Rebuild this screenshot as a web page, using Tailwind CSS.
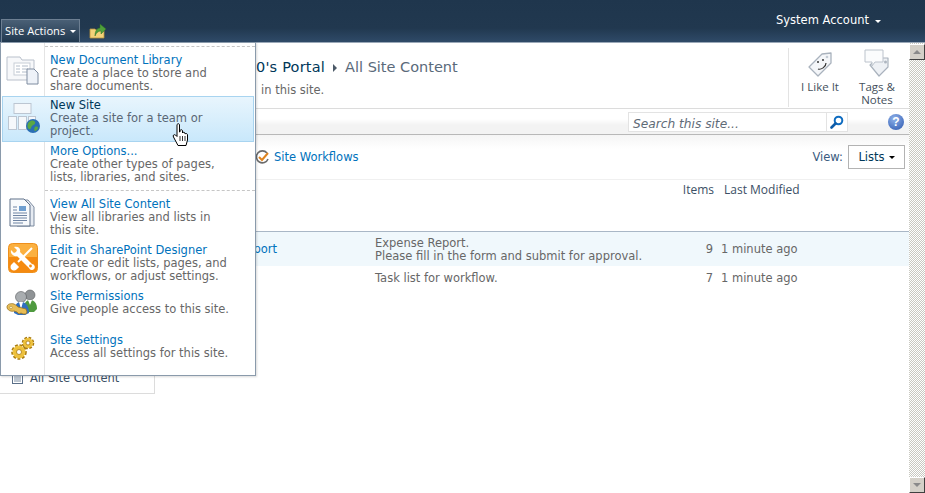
<!DOCTYPE html>
<html lang="en">
<head>
  <meta charset="UTF-8">
  <title>All Site Content</title>
  <script src="https://cdn.jsdelivr.net/npm/@tailwindcss/browser@4"></script>
</head>
<body class="bg-white overflow-hidden">
<div class="relative w-[925px] h-[493px] overflow-hidden bg-white text-[11.5px] leading-[13px] text-[#676767] font-['DejaVu_Sans',sans-serif]">

  <!-- top bar -->
  <div class="h-[43px] flex items-start justify-between bg-[linear-gradient(#1f364d_0,#21384f_28px,#2f4a68_42px)] border-b border-[#9aa8b8]">
    <div class="flex items-center mt-[19px] ml-[1px]">
      <div class="w-[79px] h-[24px] flex items-center pl-[3px] gap-[5px] border border-b-0 border-[#6d7f92] bg-[linear-gradient(#4a6076,#1f364d)] text-white text-[11.2px] font-['Open_Sans',sans-serif]">
        <span class="-mt-[2px]">Site Actions</span>
        <span class="w-0 h-0 border-x-[3px] border-x-transparent border-t-[3px] border-t-white"></span>
      </div>
      <svg class="ml-[9px] -mt-[1px]" width="18" height="16" viewBox="0 0 18 16">
        <path d="M1 6h5l1 1h8v8H1z" fill="#f3d27a" stroke="#b8923c" stroke-width=".8"/>
        <path d="M6 13c0-5 2-8 5-8V1l6 5-5 5V8c-3 0-5 2-6 5z" fill="#4fa03a" stroke="#2f6f24" stroke-width=".5"/>
      </svg>
    </div>
    <div class="flex items-center gap-[6px] mt-[14px] mr-[44px] text-white text-[11.5px]">
      <span>System Account</span>
      <span class="w-0 h-0 border-x-[3px] border-x-transparent border-t-[3px] border-t-white mt-[2px]"></span>
    </div>
  </div>

  <div class="flex h-[450px]">
    <!-- page -->
    <div class="w-[909px] flex flex-col">

      <!-- title row -->
      <div class="h-[66px] shrink-0 flex justify-between border-b border-[#dcdcdc]">
        <div class="pl-[256px] pt-[14px]">
          <div class="flex items-center text-[14.5px] leading-[20px]">
            <span class="text-[#003759] tracking-[0.2px]">0's Portal</span>
            <span class="ml-[8px] mr-[8px] w-0 h-0 border-y-[4px] border-y-transparent border-l-[4px] border-l-[#4c5a68] mt-[2px]"></span>
            <span class="text-[#5a6a7a]">All Site Content</span>
          </div>
          <div class="mt-[7px] pl-[5px] text-[#676767]">in this site.</div>
        </div>
        <div class="flex mt-[5px] mb-[1px] border-l border-[#e3e3e3] w-[121px] text-[#44505c] text-center font-['Open_Sans',sans-serif] text-[11.5px] leading-[13px]">
          <div class="w-[62px] flex flex-col items-center pt-[2px]">
            <svg class="shrink-0" width="28" height="28" viewBox="0 0 28 28">
              <path d="M3 17L16 4l9-1v10L12 26z" fill="#f4f6f9" stroke="#a9b2bd" stroke-width="1.300" stroke-linejoin="round"/>
              <circle cx="21" cy="7" r="1.300" fill="#c3cbd4"/>
              <circle cx="12" cy="12" r="1" fill="#333"/><circle cx="17" cy="10" r="1" fill="#333"/>
              <path d="M12 19c3 1 8-2 8-6" fill="none" stroke="#333" stroke-width="1.200"/>
            </svg>
            <span class="mt-[2px] whitespace-nowrap">I Like It</span>
          </div>
          <div class="w-[52px] flex flex-col items-center whitespace-nowrap">
            <svg class="shrink-0" width="30" height="30" viewBox="0 0 30 30">
              <path d="M8 17l8-7 10 0v9l-9 9z" fill="#eef1f5" stroke="#a9b2bd" stroke-width="1.200" stroke-linejoin="round"/>
              <path d="M3 2h18v12h-8l-3 4v-4H3z" fill="#fbfcfd" stroke="#bcc3cc" stroke-linejoin="round"/>
              <circle cx="23.500" cy="14" r="1.500" fill="#aeb6c0"/>
            </svg>
            <span class="mt-[2px]">Tags &amp;<br>Notes</span>
          </div>
        </div>
      </div>

      <!-- search row -->
      <div class="h-[26px] shrink-0 flex items-start justify-end bg-[linear-gradient(#ffffff_0,#ffffff_10px,#f3f3f3_16px,#f3f3f3)] border-b border-[#b8b8b8]">
        <div class="mt-[3px] flex h-[20px] w-[220px] border border-[#e3e3e3] bg-white mr-[61px]">
          <span class="flex-1 pl-[4px] pt-[3px] text-[12.200px] leading-[16px] italic text-[#5f6b77] whitespace-nowrap overflow-hidden">Search this site...</span>
          <span class="w-[21px] border-l border-[#e3e3e3] flex items-center justify-center">
            <svg width="14" height="14" viewBox="0 0 14 14"><circle cx="8.500" cy="5.500" r="3.800" fill="none" stroke="#0f6cc0" stroke-width="2"/><path d="M5.500 8.500L1.500 12.500" stroke="#0f5ca8" stroke-width="2.600" stroke-linecap="round"/></svg>
          </span>
        </div>
        <span class="absolute left-[888px] top-[114px] w-[16px] h-[16px] rounded-full bg-[radial-gradient(circle_at_40%_30%,#8fb2ea,#2a55ad)] text-white text-[12px] leading-[16px] font-bold text-center font-['Liberation_Sans',sans-serif]">?</span>
      </div>

      <!-- toolbar -->
      <div class="h-[45px] shrink-0 flex justify-between bg-[linear-gradient(#f5f5f5_0,#ffffff_14px)] border-b border-[#f0f0f0]">
        <div class="flex items-center gap-[4px] pl-[255px] h-[44px]">
          <svg width="15" height="16" viewBox="0 0 15 16">
            <path d="M12 4A6 6 0 1 0 13 10" fill="none" stroke="#6b6b6b" stroke-width="1.600"/>
            <path d="M4 8l3 3 6-7" fill="none" stroke="#df8420" stroke-width="2"/>
          </svg>
          <span class="text-[#0072bc]">Site Workflows</span>
        </div>
        <div class="flex items-center gap-[5px] pr-[4px] h-[44px]">
          <span class="text-[#3a5a80]">View:</span>
          <span class="w-[57px] h-[24px] flex items-center justify-center gap-[4px] border border-[#b3b3b3] text-[#003759] bg-white">Lists
            <span class="w-0 h-0 border-x-[3px] border-x-transparent border-t-[3px] border-t-black mt-[1px]"></span>
          </span>
        </div>
      </div>

      <!-- body -->
      <div class="flex flex-1 min-h-0">
        <!-- quick launch -->
        <div class="w-[155px] h-[214px] shrink-0 border-r border-b border-[#dcdcdc] flex items-end pb-[8px] pl-[11px] gap-[6px]">
          <svg width="13" height="14" viewBox="0 0 13 14"><rect x="1.500" y="1.500" width="10" height="11" fill="#fff" stroke="#5a6f88"/><path d="M3 4h7M3 6h7M3 8h7M3 10h7" stroke="#7d8fa4"/></svg>
          <span class="text-[#3b4f65]">All Site Content</span>
        </div>
        <!-- lists table -->
        <div class="flex-1">
          <div class="h-[52px] border-b border-[#a9b7c6] pt-[3px] flex text-[#3b4f65] font-['Open_Sans',sans-serif] text-[12px]">
            <div class="w-[559px] text-right">Items</div>
            <div class="ml-[10px]">Last Modified</div>
          </div>
          <div class="h-[34px] pt-[1px] flex items-center bg-[#f0f8fc]">
            <div class="w-[220px] text-right pr-[98px] text-[#0072bc] whitespace-nowrap">port</div>
            <div class="w-[302px] whitespace-nowrap">Expense Report.<br>Please fill in the form and submit for approval.</div>
            <div class="w-[36px] text-right">9</div>
            <div class="ml-[8px] whitespace-nowrap">1 minute ago</div>
          </div>
          <div class="h-[24px] flex items-center">
            <div class="w-[220px]"></div>
            <div class="w-[302px] whitespace-nowrap">Task list for workflow.</div>
            <div class="w-[36px] text-right">7</div>
            <div class="ml-[8px] whitespace-nowrap">1 minute ago</div>
          </div>
        </div>
      </div>
    </div>

    <!-- scrollbar -->
    <div class="w-[16px] flex flex-col justify-between bg-[repeating-conic-gradient(#c9c9c1_0_25%,#ffffff_0_50%)] bg-[length:2px_2px]">
      <div class="h-[16px] bg-[#d4d0c8] border border-t-white border-l-white border-r-[#404040] border-b-[#404040] flex items-center justify-center mt-[1px]">
        <span class="w-0 h-0 border-x-[4px] border-x-transparent border-b-[4px] border-b-[#8a8a8a]"></span>
      </div>
      <div class="h-[16px] bg-[#d4d0c8] border border-t-white border-l-white border-r-[#404040] border-b-[#404040] flex items-center justify-center">
        <span class="w-0 h-0 border-x-[4px] border-x-transparent border-t-[4px] border-t-[#8a8a8a]"></span>
      </div>
    </div>
  </div>

  <!-- site actions menu -->
  <div class="absolute left-0 top-[42px] w-[256px] h-[334px] bg-white border border-[#8a9aab] pl-[1px] shadow-[1px_1px_2px_rgba(0,0,0,0.15)]">
    <div class="absolute left-[43px] top-0 bottom-0 w-px bg-[#e4e4e4]"></div>
    <div class="absolute left-[44px] right-0 top-[3px] border-t border-dashed border-[#c6c6c6]"></div>
    <div class="absolute left-[44px] right-0 top-[147px] border-t border-dashed border-[#c6c6c6]"></div>

    <div class="relative flex flex-col pt-[7px]">
      <div class="h-[46px] flex">
        <div class="w-[42px] flex justify-center pt-[6px] shrink-0">
          <svg class="-ml-[1px]" width="33" height="29" viewBox="0 0 33 29">
            <path d="M1 1h13l2 3h12v20H1z" fill="#f7f8fa" stroke="#b9c0cb"/>
            <rect x="8" y="7" width="16" height="12" fill="#fff" stroke="#c7cdd6"/>
            <path d="M10 10h4M16 10h6M10 13h4M16 13h6M10 16h4M16 16h6" stroke="#b2bcc9"/>
            <path d="M21 13h7l4 4v11H21z" fill="#eef2f8" stroke="#7f8ca0"/>
          </svg>
        </div>
        <div class="pl-[6px] pt-[4px]"><div class="text-[#0072bc]">New Document Library</div><div>Create a place to store and<br>share documents.</div></div>
      </div>
      <div class="h-[46px] flex mr-[1px] border border-[#a8d4f0] bg-[linear-gradient(#e8f5fd,#c9e8fb)]">
        <div class="w-[41px] flex justify-center pt-[5px] shrink-0">
          <svg class="-ml-[1px]" width="33" height="32" viewBox="0 0 33 32">
            <rect x="7" y="1.500" width="17" height="10" fill="#f5f8fb" stroke="#bcc6d2"/>
            <rect x="1.500" y="14.500" width="8" height="13" fill="#f5f8fb" stroke="#bcc6d2"/>
            <rect x="11.500" y="14.500" width="8" height="13" fill="#f5f8fb" stroke="#bcc6d2"/>
            <rect x="21.500" y="14.500" width="7" height="8" fill="#f5f8fb" stroke="#bcc6d2"/>
            <circle cx="26" cy="24" r="7" fill="#2a6fb5"/>
            <path d="M22 20c2-2 5-2 6 0s-2 3-3 4-1 4-3 3-2-5 0-7zM28 25c2-1 3 0 3 1s-2 3-3 3-1-3 0-4z" fill="#5aa845"/>
          </svg>
        </div>
        <div class="pl-[6px] pt-[2px] text-[#5a6775]"><div class="text-[#003759]">New Site</div><div>Create a site for a team or<br>project.</div></div>
      </div>
      <div class="h-[48px] flex">
        <div class="w-[42px] shrink-0"></div>
        <div class="pl-[6px] pt-[3px]"><div class="text-[#0072bc]">More Options...</div><div>Create other types of pages,<br>lists, libraries, and sites.</div></div>
      </div>
      <div class="h-[46px] flex mt-[7px]">
        <div class="w-[42px] flex justify-center shrink-0">
          <svg class="-ml-[2px]" width="28" height="32" viewBox="0 0 28 32">
            <path d="M9 3h11l6 7v19H9z" fill="#e6ebf2" stroke="#7d8ba0"/>
            <path d="M2 2h14l6 6v21H2z" fill="#f8fafc" stroke="#5f7089"/>
            <rect x="11" y="9" width="7" height="5" fill="#6f9fd0"/>
            <path d="M5 10h4M5 13h4M5 16h14M5 18.500h14M5 21h14M5 23.500h14M5 26h10" stroke="#6f84a3"/>
          </svg>
        </div>
        <div class="pl-[6px] pt-[1px]"><div class="text-[#0072bc]">View All Site Content</div><div>View all libraries and lists in<br>this site.</div></div>
      </div>
      <div class="h-[46px] flex">
        <div class="w-[42px] flex justify-center shrink-0">
          <svg class="-ml-[1px]" width="30" height="30" viewBox="0 0 30 30">
            <rect x=".5" y=".5" width="29" height="29" rx="4" fill="#fbb040" stroke="#ee8f1c"/>
            <path d="M1 14h28v11a4 4 0 0 1-4 4H5a4 4 0 0 1-4-4z" fill="#f58a10"/>
            <!-- screwdriver -->
            <path d="M24 5l-14 14" stroke="#fff" stroke-width="2"/>
            <path d="M6 20l4 4-2 2c-1 1-3 1-4 0s-1-3 0-4z" fill="#fff" stroke="#fff" stroke-width="1.500"/>
            <!-- wrench -->
            <path d="M6 4l3 3-1 2-2 1-3-3c-1 4 3 7 6 6l12 12a3 3 0 1 0 3-4L12 9c1-4-2-6-6-5z" fill="#fff"/>
            <circle cx="22.500" cy="23" r="1.400" fill="#f58a10"/>
          </svg>
        </div>
        <div class="pl-[6px] pt-[1px]"><div class="text-[#0072bc]">Edit in SharePoint Designer</div><div>Create or edit lists, pages, and<br>workflows, or adjust settings.</div></div>
      </div>
      <div class="h-[45px] flex">
        <div class="w-[42px] flex justify-center shrink-0">
          <svg class="-ml-[1px]" width="33" height="32" viewBox="0 0 33 32">
            <circle cx="24" cy="6" r="5" fill="#8f9396" stroke="#5c5f62" stroke-width=".6"/>
            <path d="M18 20c0-6 2-9 6-9s7 3 7 9l-3 3h-6z" fill="#4f9a3f"/>
            <path d="M22 11h4l-2 5z" fill="#fff"/>
            <circle cx="15" cy="8" r="5.500" fill="#a9adb0" stroke="#55585b" stroke-width=".6"/>
            <path d="M8 24c0-8 3-11 7-11s8 3 8 11l-4 2h-7z" fill="#2f6fc0"/>
            <path d="M13 13h4l-2 7z" fill="#fff"/>
            <path d="M1 18c0-3 4-4 7-3 2 1 3 2 4 3l8 2 1 3-1 2-3 0-2-1-2 1-2-2-3-1c-3 1-7-1-7-4z" fill="#e8bd55" stroke="#9a7420" stroke-width=".8"/>
            <circle cx="5" cy="18.500" r="1.300" fill="#fff3c8" stroke="#9a7420" stroke-width=".5"/>
          </svg>
        </div>
        <div class="pl-[6px] pt-[1px]"><div class="text-[#0072bc]">Site Permissions</div><div>Give people access to this site.</div></div>
      </div>
      <div class="h-[44px] flex">
        <div class="w-[42px] flex justify-center pt-[1px] shrink-0">
          <svg width="26" height="26" viewBox="0 0 26 26">
            <circle cx="18" cy="8" r="4.600" fill="#edc03c" stroke="#a87a10" stroke-width="3.400" stroke-dasharray="2.300 1.300"/>
            <circle cx="18" cy="8" r="4.400" fill="#edc03c" stroke="#f0c644" stroke-width="1.200"/>
            <circle cx="18" cy="8" r="2" fill="#fff" stroke="#a87a10" stroke-width=".8"/>
            <circle cx="9" cy="17" r="6" fill="#edc03c" stroke="#a87a10" stroke-width="3.600" stroke-dasharray="2.500 1.500"/>
            <circle cx="9" cy="17" r="5.800" fill="#edc03c" stroke="#f0c644" stroke-width="1.200"/>
            <circle cx="9" cy="17" r="2.500" fill="#fff" stroke="#a87a10" stroke-width=".8"/>
          </svg>
        </div>
        <div class="pl-[6px]"><div class="text-[#0072bc]">Site Settings</div><div>Access all settings for this site.</div></div>
      </div>
    </div>
  </div>

  <!-- mouse cursor -->
  <svg class="absolute left-[172px] top-[123px]" width="18" height="24" viewBox="0 0 18 24">
    <path d="M5 1.500c1-1 2-1 2.500 0V9h.5V7.500c1-1 2-1 2.500 0V10c.5-1 2-1 2.500 0v1c.5-.7 2-.7 2.500.5V17l-1.500 5.500H6L1.500 14c-1-1.500.5-3 2-2l1.500 1.500z" fill="#fff" stroke="#000" stroke-width="1"/>
    <path d="M8 13v5M10.500 13v5M13 13v5" stroke="#000" stroke-width=".8"/>
  </svg>
</div>
</body>
</html>
